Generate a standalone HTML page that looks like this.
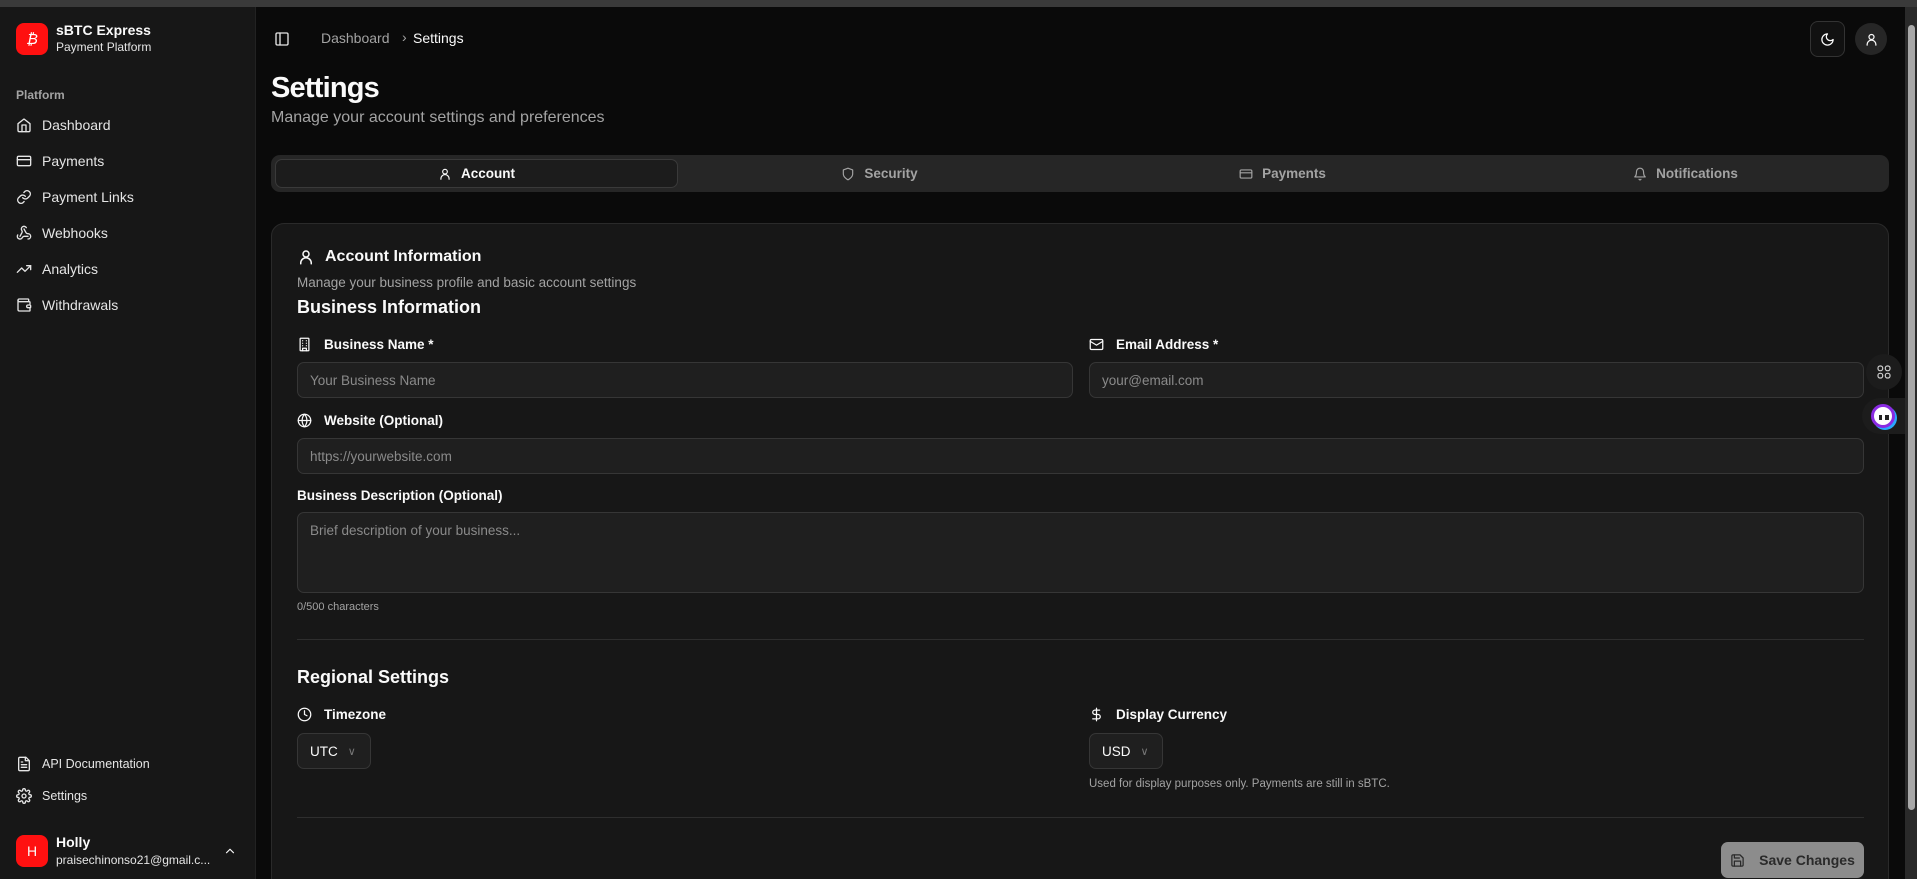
<!DOCTYPE html>
<html style="overflow:hidden;width:1917px;height:879px"><head><meta charset="utf-8"><style>
*{box-sizing:border-box;margin:0;padding:0}
body{width:1917px;height:879px;overflow:hidden;background:#0a0a0a;font-family:"Liberation Sans",sans-serif;color:#fafafa;position:relative}
.abs{position:absolute}
.topbar{left:0;top:0;width:1917px;height:7px;background:#3a3a3a}
.side{left:0;top:7px;width:256px;height:872px;background:#171717;border-right:1px solid #222}
.nav{position:absolute;left:16px;display:flex;align-items:center;gap:10px;font-size:14px;color:#e5e5e5}
.nav svg{width:16px;height:16px}
svg{fill:none;stroke:currentColor;stroke-width:2;stroke-linecap:round;stroke-linejoin:round}
.lbl{position:absolute;font-size:13.5px;font-weight:bold;display:flex;align-items:center;gap:12px;color:#fafafa}
.lbl svg{width:15px;height:15px}
.inp{position:absolute;background:#1f1f1f;border:1px solid #363636;border-radius:7px;font-size:13.5px;color:#8a8a8a;padding-left:12px;display:flex;align-items:center}
.tab{position:absolute;top:159px;height:29px;display:flex;align-items:center;justify-content:center;gap:9px;font-size:13.5px;font-weight:bold;color:#a3a3a3}
.tab svg{width:14px;height:14px}
</style></head><body>
<div class="abs topbar"></div>
<div class="abs side">
  <div class="abs" style="left:16px;top:16px;width:32px;height:32px;background:#ff1010;border-radius:8px;color:#fff;font-size:15px;font-style:italic;display:flex;align-items:center;justify-content:center">₿</div>
  <div class="abs" style="left:56px;top:15px;font-size:14px;font-weight:bold">sBTC Express</div>
  <div class="abs" style="left:56px;top:33px;font-size:12px;color:#e5e5e5">Payment Platform</div>
  <div class="abs" style="left:16px;top:81px;font-size:12px;color:#a3a3a3;font-weight:bold">Platform</div>
  <div class="nav" style="top:110px"><svg viewBox="0 0 24 24"><path d="M3 10l9-7 9 7v10a2 2 0 0 1-2 2H5a2 2 0 0 1-2-2z"/><path d="M9 22V12h6v10"/></svg>Dashboard</div>
  <div class="nav" style="top:146px"><svg viewBox="0 0 24 24"><rect x="2" y="5" width="20" height="14" rx="2"/><path d="M2 10h20"/></svg>Payments</div>
  <div class="nav" style="top:182px"><svg viewBox="0 0 24 24"><path d="M10 13a5 5 0 0 0 7.5.5l3-3a5 5 0 0 0-7-7l-1.7 1.7"/><path d="M14 11a5 5 0 0 0-7.5-.5l-3 3a5 5 0 0 0 7 7l1.7-1.7"/></svg>Payment Links</div>
  <div class="nav" style="top:218px"><svg viewBox="0 0 24 24"><path d="M18 16.98h-5.99c-1.1 0-1.950.94-2.48 1.9A4 4 0 0 1 2 17c.01-.7.2-1.4.57-2"/><path d="M6 17l3.13-5.78c.53-.97.1-2.18-.5-3.1a4 4 0 1 1 6.89-4.06"/><path d="M12 6l3.13 5.73C15.66 12.7 16.9 13 18 13a4 4 0 0 1 0 8"/></svg>Webhooks</div>
  <div class="nav" style="top:254px"><svg viewBox="0 0 24 24"><path d="M22 7l-8.5 8.5-5-5L2 17"/><path d="M16 7h6v6"/></svg>Analytics</div>
  <div class="nav" style="top:290px"><svg viewBox="0 0 24 24"><path d="M19 7V4a1 1 0 0 0-1-1H5a2 2 0 0 0 0 4h15a1 1 0 0 1 1 1v4h-3a2 2 0 0 0 0 4h3a1 1 0 0 0 1-1v-2"/><path d="M3 5v14a2 2 0 0 0 2 2h15a1 1 0 0 0 1-1v-4"/></svg>Withdrawals</div>
  <div class="nav" style="top:749px;font-size:12.5px"><svg viewBox="0 0 24 24"><path d="M15 2H6a2 2 0 0 0-2 2v16a2 2 0 0 0 2 2h12a2 2 0 0 0 2-2V7z"/><path d="M14 2v5h5M16 13H8M16 17H8M10 9H8"/></svg>API Documentation</div>
  <div class="nav" style="top:781px;font-size:12.5px"><svg viewBox="0 0 24 24"><circle cx="12" cy="12" r="3"/><path d="M19.4 15a1.7 1.7 0 0 0 .3 1.8l.1.1a2 2 0 1 1-2.8 2.8l-.1-.1a1.7 1.7 0 0 0-1.8-.3 1.7 1.7 0 0 0-1 1.5V21a2 2 0 1 1-4 0v-.1a1.7 1.7 0 0 0-1.1-1.5 1.7 1.7 0 0 0-1.8.3l-.1.1a2 2 0 1 1-2.8-2.8l.1-.1a1.7 1.7 0 0 0 .3-1.8 1.7 1.7 0 0 0-1.5-1H3a2 2 0 1 1 0-4h.1a1.7 1.7 0 0 0 1.5-1.1 1.7 1.7 0 0 0-.3-1.8l-.1-.1a2 2 0 1 1 2.8-2.8l.1.1a1.7 1.7 0 0 0 1.8.3H9a1.7 1.7 0 0 0 1-1.5V3a2 2 0 1 1 4 0v.1a1.7 1.7 0 0 0 1 1.5 1.7 1.7 0 0 0 1.8-.3l.1-.1a2 2 0 1 1 2.8 2.8l-.1.1a1.7 1.7 0 0 0-.3 1.8V9a1.7 1.7 0 0 0 1.5 1H21a2 2 0 1 1 0 4h-.1a1.7 1.7 0 0 0-1.500 1z"/></svg>Settings</div>
  <div class="abs" style="left:16px;top:828px;width:32px;height:32px;background:#ff1010;border-radius:8px;display:flex;align-items:center;justify-content:center;font-size:14px">H</div>
  <div class="abs" style="left:56px;top:827px;font-size:14px;font-weight:bold">Holly</div>
  <div class="abs" style="left:56px;top:846px;font-size:12px;color:#e5e5e5">praisechinonso21@gmail.c...</div>
  <svg class="abs" style="left:223px;top:837px;width:14px;height:14px" viewBox="0 0 24 24"><path d="M6 15l6-6 6 6"/></svg>
</div>
<svg class="abs" style="left:274px;top:31px;width:16px;height:16px;color:#e5e5e5" viewBox="0 0 24 24"><rect x="3" y="3" width="18" height="18" rx="2"/><path d="M9 3v18"/></svg>
<div class="abs" style="left:321px;top:30px;font-size:14px;color:#a3a3a3">Dashboard</div>
<div class="abs" style="left:402px;top:29px;font-size:14px;color:#a3a3a3">›</div>
<div class="abs" style="left:413px;top:30px;font-size:14px;color:#fafafa">Settings</div>
<div class="abs" style="left:1810px;top:21px;width:35px;height:36px;border:1px solid #333;border-radius:8px;background:#111;display:flex;align-items:center;justify-content:center"><svg style="width:15px;height:15px" viewBox="0 0 24 24"><path d="M12 3a6 6 0 0 0 9 9 9 9 0 1 1-9-9z"/></svg></div>
<div class="abs" style="left:1855px;top:23px;width:32px;height:32px;border-radius:50%;background:#262626;display:flex;align-items:center;justify-content:center"><svg style="width:15px;height:15px" viewBox="0 0 24 24"><circle cx="12" cy="8" r="4"/><path d="M5 21v-1a7 7 0 0 1 14 0v1"/></svg></div>
<div class="abs" style="left:271px;top:72px;font-size:29px;font-weight:bold;letter-spacing:-0.8px">Settings</div>
<div class="abs" style="left:271px;top:109px;font-size:16px;color:#a3a3a3">Manage your account settings and preferences</div>
<div class="abs" style="left:271px;top:155px;width:1618px;height:37px;background:#262626;border-radius:9px"></div>
<div class="abs" style="left:275px;top:159px;width:403px;height:29px;background:#1c1c1c;border:1px solid #3a3a3a;border-radius:7px"></div>
<div class="tab" style="left:275px;width:403px;color:#fafafa"><svg viewBox="0 0 24 24"><circle cx="12" cy="8" r="4"/><path d="M5 21v-1a7 7 0 0 1 14 0v1"/></svg>Account</div>
<div class="tab" style="left:678px;width:403px"><svg viewBox="0 0 24 24"><path d="M12 22s8-4 8-10V5l-8-3-8 3v7c0 6 8 10 8 10z"/></svg>Security</div>
<div class="tab" style="left:1081px;width:403px"><svg viewBox="0 0 24 24"><rect x="2" y="5" width="20" height="14" rx="2"/><path d="M2 10h20"/></svg>Payments</div>
<div class="tab" style="left:1484px;width:403px"><svg viewBox="0 0 24 24"><path d="M6 8a6 6 0 0 1 12 0c0 7 3 9 3 9H3s3-2 3-9"/><path d="M10.3 21a1.9 1.9 0 0 0 3.4 0"/></svg>Notifications</div>
<div class="abs" style="left:271px;top:223px;width:1618px;height:670px;background:#171717;border:1px solid #2a2a2a;border-radius:13px"></div>
<div class="lbl" style="left:297px;top:248px;font-size:16px;gap:10px"><svg style="width:18px;height:18px" viewBox="0 0 24 24"><circle cx="12" cy="8" r="4"/><path d="M5 21v-1a7 7 0 0 1 14 0v1"/></svg>Account Information</div>
<div class="abs" style="left:297px;top:275px;font-size:13.5px;color:#a3a3a3">Manage your business profile and basic account settings</div>
<div class="abs" style="left:297px;top:297px;font-size:18px;font-weight:bold">Business Information</div>
<div class="lbl" style="left:297px;top:337px"><svg viewBox="0 0 24 24"><rect x="5" y="2" width="14" height="20" rx="1"/><path d="M9 22v-4h6v4M9 6h.01M15 6h.01M9 10h.01M15 10h.01M9 14h.01M15 14h.01"/></svg>Business Name *</div>
<div class="lbl" style="left:1089px;top:337px"><svg viewBox="0 0 24 24"><rect x="2" y="4" width="20" height="16" rx="2"/><path d="M22 7l-10 6L2 7"/></svg>Email Address *</div>
<div class="inp" style="left:297px;top:362px;width:776px;height:36px">Your Business Name</div>
<div class="inp" style="left:1089px;top:362px;width:775px;height:36px">your@email.com</div>
<div class="lbl" style="left:297px;top:413px"><svg viewBox="0 0 24 24"><circle cx="12" cy="12" r="10"/><path d="M2 12h20M12 2a15 15 0 0 1 0 20M12 2a15 15 0 0 0 0 20"/></svg>Website (Optional)</div>
<div class="inp" style="left:297px;top:438px;width:1567px;height:36px">https://yourwebsite.com</div>
<div class="lbl" style="left:297px;top:488px">Business Description (Optional)</div>
<div class="inp" style="left:297px;top:512px;width:1567px;height:81px;align-items:flex-start;padding-top:10px">Brief description of your business...</div>
<div class="abs" style="left:297px;top:601px;font-size:11px;color:#a3a3a3">0/500 characters</div>
<div class="abs" style="left:297px;top:639px;width:1567px;height:1px;background:#2e2e2e"></div>
<div class="abs" style="left:297px;top:667px;font-size:18px;font-weight:bold">Regional Settings</div>
<div class="lbl" style="left:297px;top:707px"><svg viewBox="0 0 24 24"><circle cx="12" cy="12" r="10"/><path d="M12 6v6l4 2"/></svg>Timezone</div>
<div class="lbl" style="left:1089px;top:707px"><svg viewBox="0 0 24 24"><path d="M12 2v20M17 5H9.5a3.5 3.5 0 0 0 0 7h5a3.5 3.5 0 0 1 0 7H6"/></svg>Display Currency</div>
<div class="inp" style="left:297px;top:733px;width:74px;height:36px;color:#fafafa;gap:10px">UTC <span style="color:#777;font-size:11px">∨</span></div>
<div class="inp" style="left:1089px;top:733px;width:74px;height:36px;color:#fafafa;gap:10px">USD <span style="color:#777;font-size:11px">∨</span></div>
<div class="abs" style="left:1089px;top:778px;font-size:11.5px;color:#a3a3a3">Used for display purposes only. Payments are still in sBTC.</div>
<div class="abs" style="left:297px;top:817px;width:1567px;height:1px;background:#2e2e2e"></div>
<div class="abs" style="left:1721px;top:842px;width:143px;height:36px;background:#8c8c8c;border-radius:7px;display:flex;align-items:center;justify-content:center;gap:14px;color:#2a2a2a;font-size:14px;font-weight:bold"><svg style="width:15px;height:15px" viewBox="0 0 24 24"><path d="M19 21H5a2 2 0 0 1-2-2V5a2 2 0 0 1 2-2h11l5 5v11a2 2 0 0 1-2 2z"/><path d="M17 21v-8H7v8M7 3v5h8"/></svg>Save Changes</div>
<div class="abs" style="left:1866px;top:354px;width:36px;height:36px;border-radius:50%;background:#1c1c1c;display:flex;align-items:center;justify-content:center;color:#ccc"><svg style="width:16px;height:16px;stroke-width:1.8" viewBox="0 0 24 24"><rect x="3" y="3" width="7" height="7" rx="3"/><rect x="14" y="3" width="7" height="7" rx="3"/><rect x="3" y="14" width="7" height="7" rx="3"/><rect x="14" y="14" width="7" height="7" rx="3"/></svg></div>
<div class="abs" style="left:1862px;top:398px;width:44px;height:36px;border-radius:18px 0 0 18px;background:#1c1c1c"></div>
<div class="abs" style="left:1871px;top:404px;width:24px;height:24px;border-radius:50%;background:#fff;border:3px solid #8a2be2;box-shadow:2px 2px 0 #2aa8ff"><div class="abs" style="left:5px;top:8px;width:3px;height:5px;background:#222"></div><div class="abs" style="left:11px;top:8px;width:4px;height:5px;background:#222"></div></div>
<div class="abs" style="left:1905px;top:7px;width:12px;height:872px;background:#2a2a2a"></div>
<div class="abs" style="left:1908px;top:25px;width:7px;height:785px;background:#a8a8a8;border-radius:4px"></div>
</body></html>
